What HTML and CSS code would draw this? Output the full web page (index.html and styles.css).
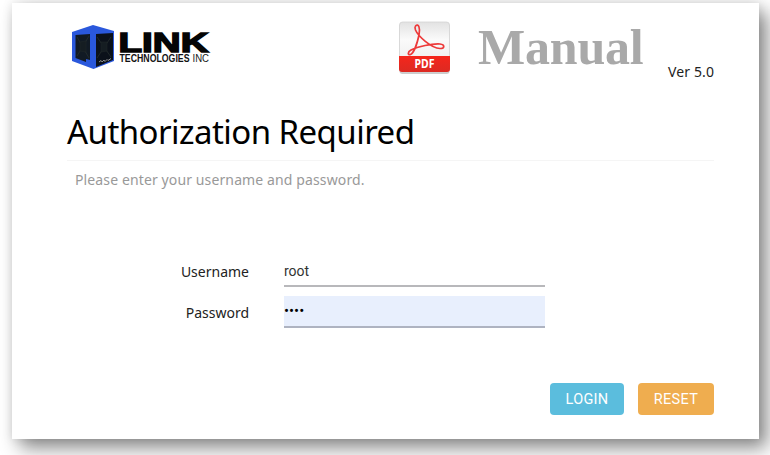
FILE: index.html
```html
<!DOCTYPE html>
<html lang="en">
<head>
<meta charset="utf-8">
<title>Authorization Required</title>
<link rel="stylesheet" href="styles.css">
</head>
<body>
<main class="card">
  <header class="header">
    <svg class="logo" width="144" height="48" viewBox="0 0 144 48">
      <path d="M5 8 26 1 47 7V37L26.500 45 5 37Z" fill="#2a58dc"/>
      <path d="M29 10 46 9V36L29 43Z" fill="#0b111a"/>
      <path d="M8.500 11 23 10V36L19 35V38L8.500 34Z" fill="#111a24"/>
      <path d="M10 13 22 34M10 32 22 12M30 13 44 33M30 34 44 13" stroke="#283231" stroke-width=".7"/>
      <path d="M13 18 19 17V28L13 27ZM34 18 40 18V27L34 28Z" fill="#151d22" stroke="#232b2a" stroke-width=".5"/>
      <path d="M32 38 34 36.500 35 38 37 36 38 37.500 40 35.500 41 36.500 44 34.500" fill="none" stroke="#aaa" stroke-width=".8"/>
      <text class="logo-name" x="51.500" y="27.800" textLength="90" lengthAdjust="spacingAndGlyphs">LINK</text>
      <text class="logo-sub" x="52.500" y="38" textLength="70" lengthAdjust="spacingAndGlyphs">TECHNOLOGIES</text>
      <text class="logo-inc" x="125.500" y="38" textLength="16.500" lengthAdjust="spacingAndGlyphs">INC</text>
    </svg>
    <a class="manual">
      <svg class="pdf" width="54" height="56" viewBox="0 0 54 56">
        <defs>
          <linearGradient id="paper" x1="0" y1="0" x2="0" y2="1"><stop stop-color="#e2e2e2"/><stop offset=".35" stop-color="#fafafa"/><stop offset="1" stop-color="#e9e9e9"/></linearGradient>
          <linearGradient id="band" x1="0" y1="0" x2="0" y2="1"><stop stop-color="#f5261c"/><stop offset="1" stop-color="#dc2a22"/></linearGradient>
        </defs>
        <rect x="1.500" y="3" width="50" height="51" rx="3" fill="#ccc"/>
        <rect x="1.500" y="2" width="50" height="50" rx="3" fill="url(#paper)" stroke="#d0d0d0" stroke-width=".7"/>
        <path d="M1 36H52V49Q52 52 49 52H4Q1 52 1 49Z" fill="url(#band)"/>
        <path d="M17.500 6C20.500 3 22.500 8 21 15C19.500 22 16 33 12.500 34.500C9.500 35.500 9.500 32 13 30C20 26.500 34 23.500 42 24C47 24.500 47 28.500 42 28.500C33 28 20 16 17.500 10Q16.500 7 17.500 6Z" fill="none" stroke="#ed3a3a" stroke-width="1.700"/>
        <text class="pdf-text" x="16.500" y="48" textLength="20" lengthAdjust="spacingAndGlyphs">PDF</text>
      </svg>
      <span class="manual-text">Manual</span>
    </a>
    <span class="version">Ver 5.0</span>
  </header>
  <h1 class="title">Authorization Required</h1>
  <p class="hint">Please enter your username and password.</p>
  <form class="form">
    <div class="row"><label class="label" for="user">Username</label><input class="input" id="user" type="text" value="root"></div>
    <div class="row row-password"><label class="label label-password" for="pass">Password</label><input class="input filled" id="pass" type="password" value="root"></div>
    <div class="actions"><button class="button login" type="button">LOGIN</button><button class="button reset" type="button">RESET</button></div>
  </form>
</main>
</body>
</html>
```
FILE: styles.css
```css
* { box-sizing: border-box; }
body { margin: 0; height: 455px; overflow: hidden; background: #fff; font-family: "Noto Sans", sans-serif; color: #222; display: flow-root; }
.card { margin: 3px 11px 0 12px; height: 436px; padding: 0 45px 0 55px; background: #fff; box-shadow: 8px 9px 18px rgba(0, 0, 0, .46), 0 0 10px rgba(0, 0, 0, .1); }
.header { height: 103px; display: flex; align-items: flex-start; }
.logo { margin-top: 21px; flex: none; }
.logo-name { font: bold 28px "Liberation Sans", sans-serif; fill: #050505; stroke: #050505; stroke-width: 1.5px; }
.logo-sub { font: bold 10.5px "Liberation Sans", sans-serif; fill: #111; }
.logo-inc { font: 10.5px "Liberation Sans", sans-serif; fill: #222; }
.manual { margin: 17px 0 0 187px; display: flex; }
.pdf { flex: none; }
.pdf-text { font: bold 12.5px "Noto Sans", sans-serif; fill: #fff; }
.manual-text { margin: -1px 0 0 26px; font: bold 50px/57px "Liberation Serif", serif; letter-spacing: -.2px; color: #a9a9a9; }
.version { margin: 59px 0 0 auto; font-size: 14px; letter-spacing: .1px; line-height: 20px; white-space: nowrap; }
.title { margin: 0; height: 55px; border-bottom: 1px solid #f5f5f5; font-size: 33px; font-weight: 400; letter-spacing: -.55px; line-height: 52px; color: #000; white-space: nowrap; }
.hint { margin: 9px 0 0 8px; font-size: 14px; letter-spacing: .12px; line-height: 20px; color: #999; }
.form { margin-top: 66px; }
.row { display: flex; height: 31px; }
.row-password { margin-top: 9px; height: 32px; }
.label { width: 182px; margin-right: 35px; padding-top: 2px; text-align: right; font-size: 14px; line-height: 28px; }
.label-password { padding-top: 3px; }
.input { width: 261px; height: 31px; padding: 0; border: 0; border-bottom: 2px solid #b8b8bb; background: #fff; outline: 0; font: 14px Roboto, sans-serif; color: #333; }
.filled { height: 32px; background: #e8effd; border-color: #aeb3c1; color: #000; font-size: 15px; }
.actions { display: flex; justify-content: flex-end; gap: 14px; margin-top: 55px; }
.button { height: 32px; padding: 0; border: 0; border-radius: 4px; font: 14.5px Roboto, sans-serif; letter-spacing: .3px; color: #fff; }
.login { width: 74px; background: #5bbddd; }
.reset { width: 76px; background: #efad4f; }
```
